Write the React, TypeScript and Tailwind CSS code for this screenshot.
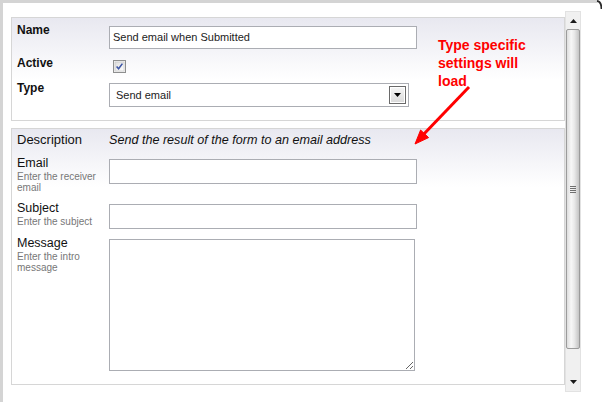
const field = "flex items-center border border-[#abadb3] bg-white";

function Checkbox() {
  return (
    <svg width="13" height="13" viewBox="0 0 13 13">
      <defs>
        <linearGradient id="cb" x1="0" y1="0" x2="1" y2="1">
          <stop offset="0" stopColor="#dcdcdc" />
          <stop offset="1" stopColor="#ffffff" />
        </linearGradient>
      </defs>
      <rect x="0.5" y="0.5" width="12" height="12" fill="#f2f2f2" stroke="#8e8f8f" />
      <rect x="2" y="2" width="9" height="9" fill="url(#cb)" stroke="#c4c4c4" strokeWidth="0.6" />
      <path d="M3.6 6.4 L5.6 8.8 L9.4 3.6" fill="none" stroke="#3d56a6" strokeWidth="1.6" />
    </svg>
  );
}

function Scrollbar() {
  return (
    <div className="mt-[8px] flex h-[381px] w-[16px] flex-col border border-[#e2e2e2] bg-[#f0f0f0]">
      <div className="flex h-[17px] items-center justify-center">
        <svg width="7" height="4" viewBox="0 0 7 4">
          <path d="M0 4 L3.5 0 L7 4 Z" fill="#1a1a1a" />
        </svg>
      </div>
      <div className="flex h-[320px] items-center justify-center rounded-[2px] border border-[#9b9b9b] bg-[linear-gradient(to_right,#dedede,#f7f7f7_35%,#eaeaea_60%,#c4c4c4)]">
        <div className="flex flex-col gap-[1px]">
          <div className="h-px w-[6px] bg-[#6f6f6f]" />
          <div className="h-px w-[6px] bg-[#6f6f6f]" />
          <div className="h-px w-[6px] bg-[#6f6f6f]" />
          <div className="h-px w-[6px] bg-[#6f6f6f]" />
        </div>
      </div>
      <div className="flex flex-1 items-end justify-center pb-[7px]">
        <svg width="7" height="4" viewBox="0 0 7 4">
          <path d="M0 0 L7 0 L3.5 4 Z" fill="#1a1a1a" />
        </svg>
      </div>
    </div>
  );
}

function Hint({ children }: { children: React.ReactNode }) {
  return <div className="text-[10px] leading-[11px] text-[#777]">{children}</div>;
}

export default function App() {
  return (
    <div className="relative h-[402px] w-[602px] border-l-[3px] border-t-[3px] border-[#d4d4d4] bg-white font-['Liberation_Sans',Arial,sans-serif] text-[#111]">
      <div className="flex">
        <div className="ml-[8px] mt-[14px] w-[554px]">
          {/* general settings */}
          <div className="h-[104px] border border-[#d6d6d6] bg-[linear-gradient(to_bottom,#e8e8f0,#ffffff_62px)] pl-[5px] pt-[5px]">
            <div className="flex h-[26px]">
              <div className="w-[92px] text-[12px] font-bold leading-[15px]">Name</div>
              <div className={`${field} mt-[3px] h-[23px] w-[308px] pl-[3px] text-[11px] text-[#222]`}>
                Send email when Submitted
              </div>
            </div>
            <div className="mt-[7px] flex h-[25px]">
              <div className="w-[92px] text-[12px] font-bold leading-[15px]">Active</div>
              <div className="ml-[4px] mt-[4px] h-[13px]">
                <Checkbox />
              </div>
            </div>
            <div className="flex h-[25px]">
              <div className="w-[92px] text-[12px] font-bold leading-[15px]">Type</div>
              <div className={`${field} mt-[2px] h-[24px] w-[300px] justify-between pl-[6px] pr-[2px] text-[11px] text-[#222]`}>
                <span>Send email</span>
                <div className="flex h-[18px] w-[17px] items-center justify-center border border-[#6a6a6a] bg-[linear-gradient(to_bottom,#f6f6f6,#d9d9d9)] shadow-[inset_0_0_0_1px_#ffffff]">
                  <svg width="7" height="4" viewBox="0 0 7 4">
                    <path d="M0 0 L7 0 L3.5 4 Z" fill="#000" />
                  </svg>
                </div>
              </div>
            </div>
          </div>

          {/* type specific settings */}
          <div className="mt-[7px] h-[257px] border border-[#d6d6d6] bg-[linear-gradient(to_bottom,#e8e8f0,#ffffff_58px)] pl-[5px] pt-[3px]">
            <div className="flex h-[16px] items-baseline">
              <div className="w-[92px] text-[13px] leading-[16px]">Description</div>
              <div className="text-[12.6px] italic leading-[16px] text-[#111]">
                Send the result of the form to an email address
              </div>
            </div>
            <div className="mt-[7px] flex">
              <div className="w-[92px]">
                <div className="text-[12.5px] leading-[16px]">Email</div>
                <Hint>
                  Enter the receiver
                  <br />
                  email
                </Hint>
              </div>
              <div className={`${field} mt-[4px] h-[25px] w-[308px]`} />
            </div>
            <div className="mt-[7px] flex">
              <div className="w-[92px]">
                <div className="text-[12.5px] leading-[16px]">Subject</div>
                <Hint>Enter the subject</Hint>
              </div>
              <div className={`${field} mt-[4px] h-[25px] w-[308px]`} />
            </div>
            <div className="mt-[6px] flex">
              <div className="w-[92px]">
                <div className="text-[12.5px] leading-[16px]">Message</div>
                <Hint>
                  Enter the intro
                  <br />
                  message
                </Hint>
              </div>
              <textarea
                readOnly
                className="mt-[4px] h-[132px] w-[306px] resize border border-[#abadb3] bg-white outline-none"
              />
            </div>
          </div>
        </div>
        <Scrollbar />
      </div>

      {/* annotation */}
      <div className="absolute left-[435px] top-[33px] text-[14px] font-bold leading-[18px] text-[#ff0000]">
        Type specific
        <br />
        settings will
        <br />
        load
      </div>
      <svg
        className="pointer-events-none absolute -left-[3px] -top-[3px]"
        width="602"
        height="402"
        viewBox="0 0 602 402"
      >
        <line x1="469" y1="87" x2="422" y2="136" stroke="#ff0000" strokeWidth="3" />
        <polygon points="415,144 428.6,137.6 420.6,130" fill="#ff0000" stroke="#ff0000" strokeWidth="1" />
        <rect x="597" y="0" width="5" height="3" fill="#ffffff" />
        <path d="M597 1 Q601.5 1.5 601.5 9" fill="none" stroke="#2a2a2a" strokeWidth="1.8" />
      </svg>
    </div>
  );
}
